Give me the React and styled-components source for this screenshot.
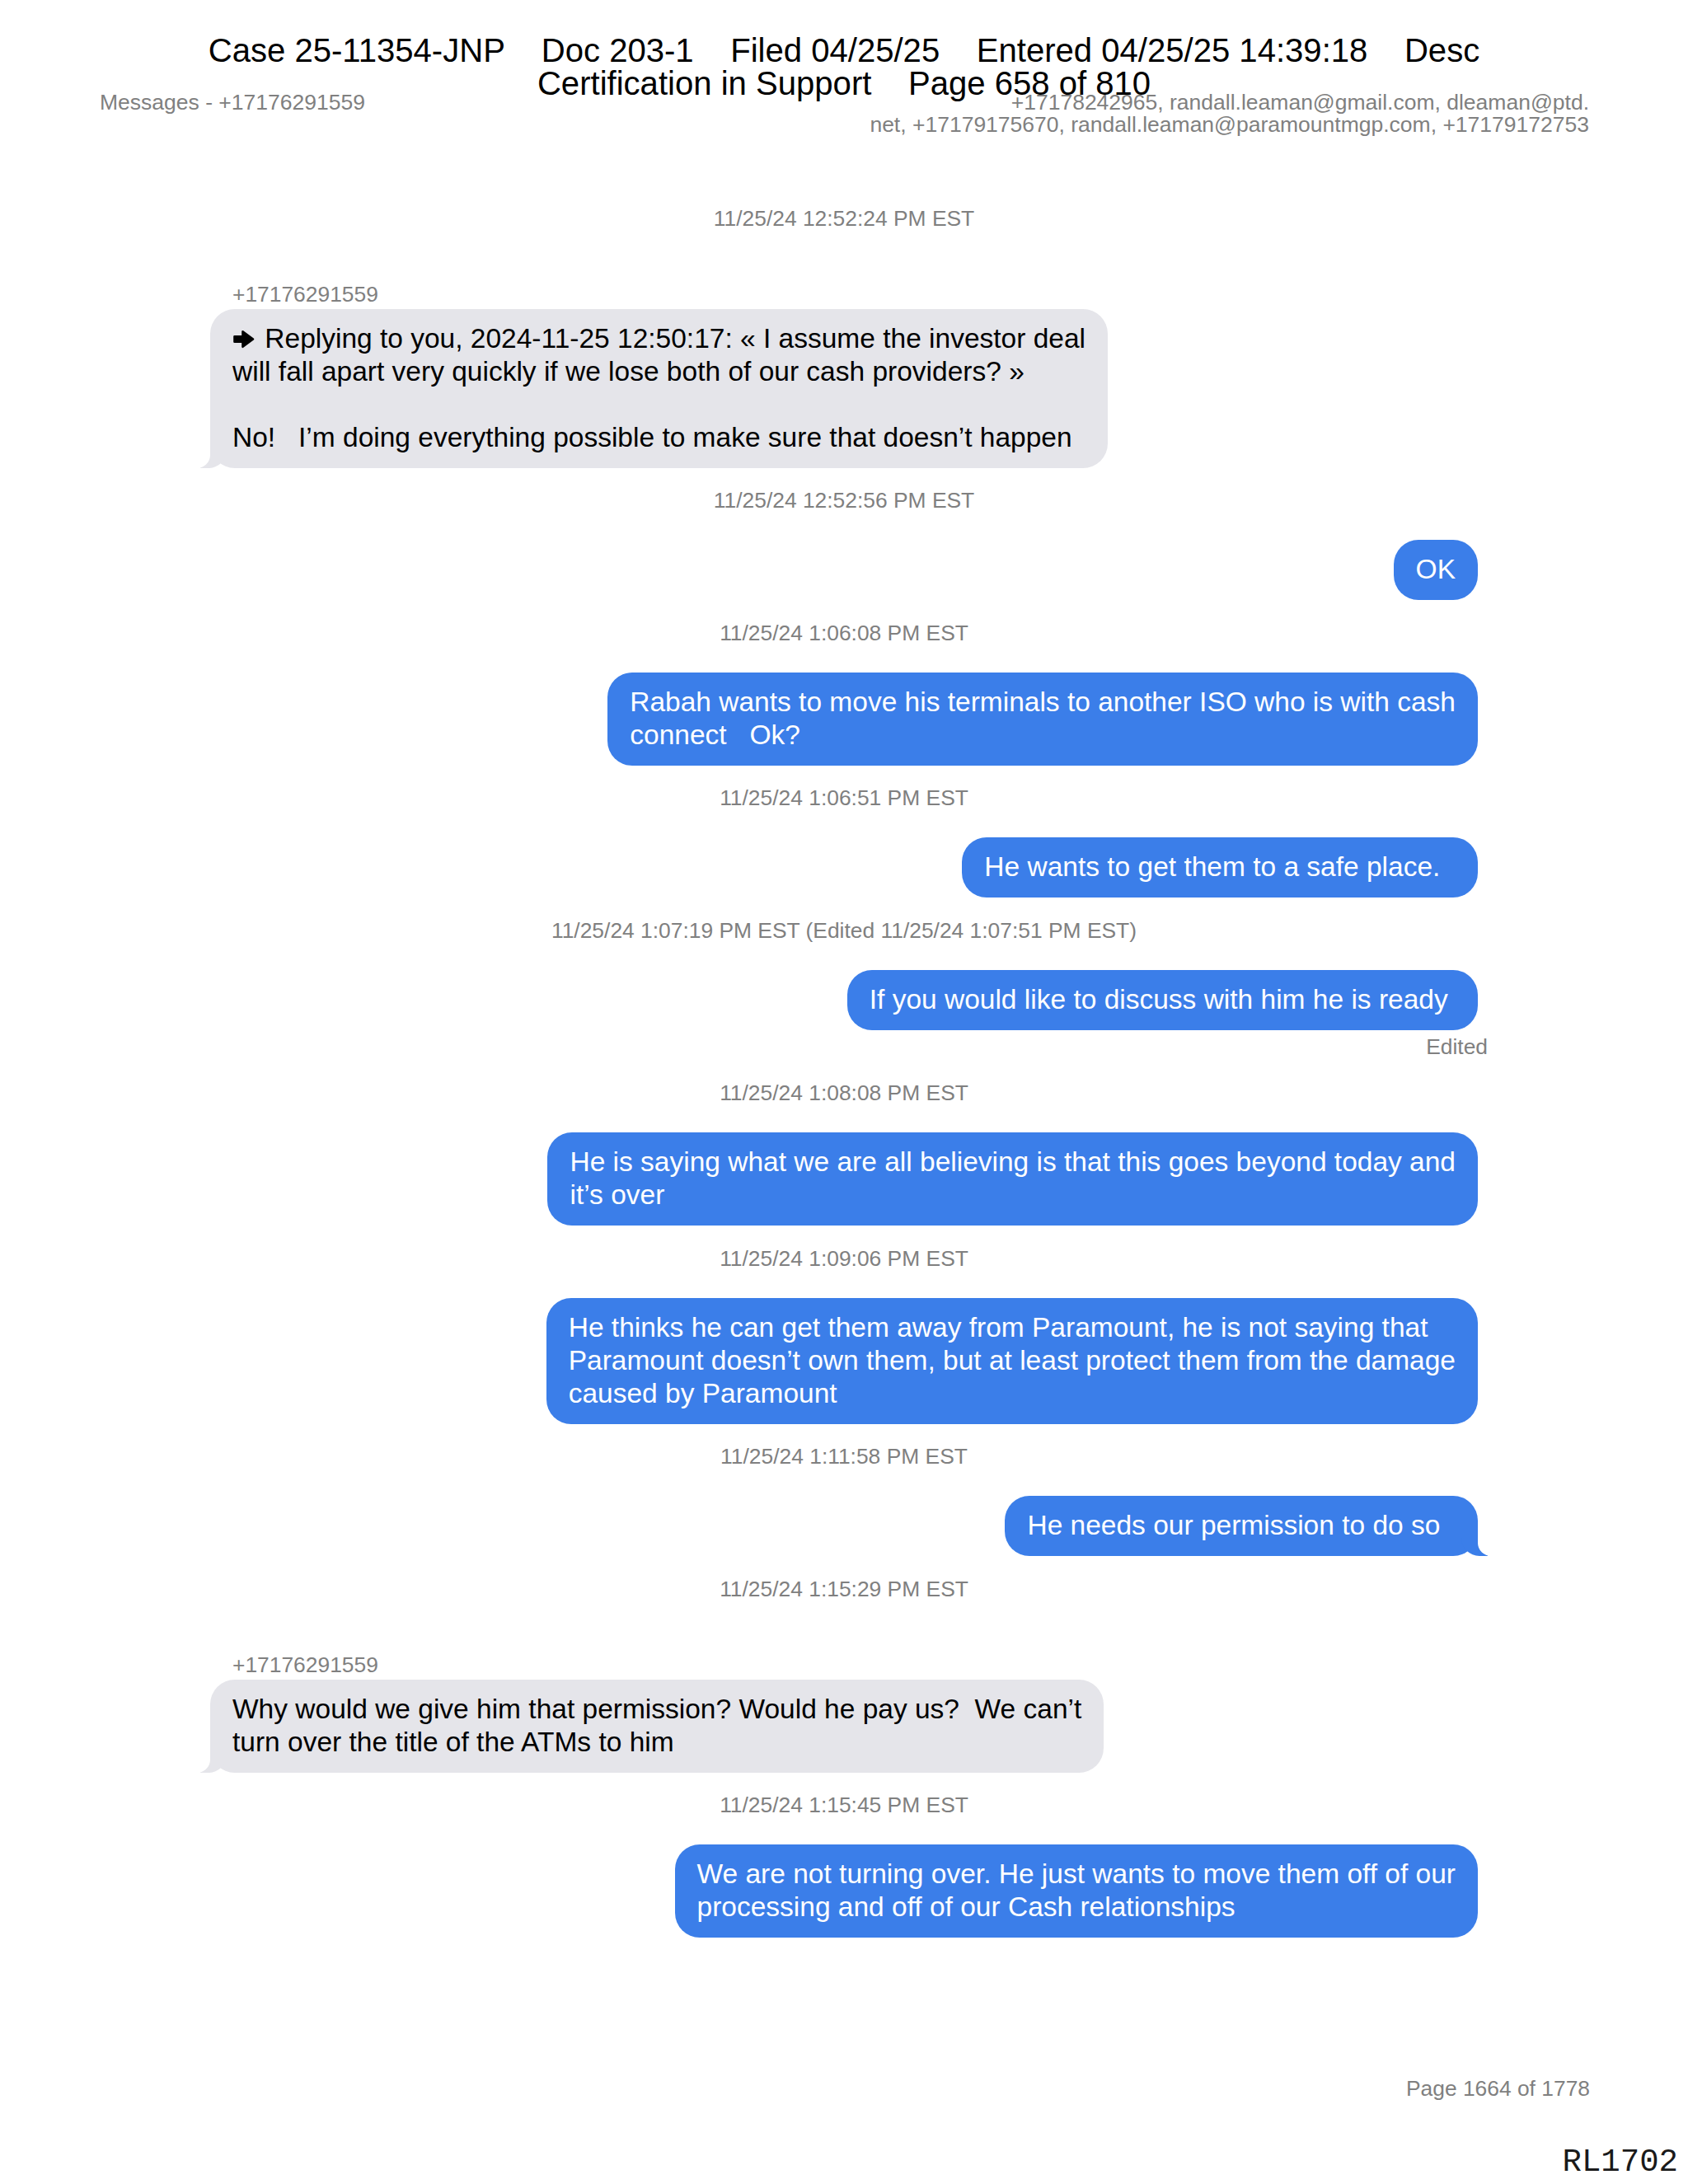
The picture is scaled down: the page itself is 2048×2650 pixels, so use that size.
import React from 'react'
import styled, { createGlobalStyle, css } from 'styled-components'

const GlobalStyle = createGlobalStyle`
  html, body {
    margin: 0;
    padding: 0;
    background: #ffffff;
  }

  body {
    font-family: 'Liberation Sans', Arial, sans-serif;
  }
`

const SENDER = '+17176291559'

const messages = [
  {
    time: '11/25/24 12:52:24 PM EST',
    mine: false,
    reply: true,
    tail: true,
    text: 'Replying to you, 2024-11-25 12:50:17: « I assume the investor deal\nwill fall apart very quickly if we lose both of our cash providers? »\n\nNo!   I’m doing everything possible to make sure that doesn’t happen',
  },
  { time: '11/25/24 12:52:56 PM EST', mine: true, text: 'OK' },
  {
    time: '11/25/24 1:06:08 PM EST',
    mine: true,
    text: 'Rabah wants to move his terminals to another ISO who is with cash\nconnect   Ok?',
  },
  { time: '11/25/24 1:06:51 PM EST', mine: true, text: 'He wants to get them to a safe place.\u00a0\u00a0' },
  {
    time: '11/25/24 1:07:19 PM EST (Edited 11/25/24 1:07:51 PM EST)',
    mine: true,
    edited: true,
    text: 'If you would like to discuss with him he is ready\u00a0',
  },
  {
    time: '11/25/24 1:08:08 PM EST',
    mine: true,
    text: 'He is saying what we are all believing is that this goes beyond today and\nit’s over',
  },
  {
    time: '11/25/24 1:09:06 PM EST',
    mine: true,
    text: 'He thinks he can get them away from Paramount, he is not saying that\nParamount doesn’t own them, but at least protect them from the damage\ncaused by Paramount',
  },
  { time: '11/25/24 1:11:58 PM EST', mine: true, tail: true, text: 'He needs our permission to do so\u00a0\u00a0' },
  {
    time: '11/25/24 1:15:29 PM EST',
    mine: false,
    tail: true,
    text: 'Why would we give him that permission? Would he pay us?  We can’t\nturn over the title of the ATMs to him',
  },
  {
    time: '11/25/24 1:15:45 PM EST',
    mine: true,
    text: 'We are not turning over. He just wants to move them off of our\nprocessing and off of our Cash relationships',
  },
]

// heavy right arrow that starts a quoted reply
const ReplyArrow = () => (
  <Arrow viewBox="0 0 27 23" aria-hidden="true">
    <path
      d="M2.5 8.2 H12.5 V2.2 L25 11.5 L12.5 20.8 V14.8 H2.5 Z"
      fill="#000"
      stroke="#000"
      strokeWidth="2.6"
      strokeLinejoin="round"
    />
  </Arrow>
)

export default function App() {
  return (
    <Page>
      <GlobalStyle />
      <FilingStamp>
        {'Case 25-11354-JNP    Doc 203-1    Filed 04/25/25    Entered 04/25/25 14:39:18    Desc\nCertification in Support    Page 658 of 810'}
      </FilingStamp>

      <HeaderBar>
        <div>Messages - {SENDER}</div>
        <Recipients>
          <span>+17178242965, randall.leaman@gmail.com, dleaman@ptd.</span>
          <span>net, +17179175670, randall.leaman@paramountmgp.com, +17179172753</span>
        </Recipients>
      </HeaderBar>

      <Thread>
        {messages.map((m, i) => (
          <React.Fragment key={i}>
            <Timestamp>{m.time}</Timestamp>
            {!m.mine && <Sender>{SENDER}</Sender>}
            <Bubble $mine={m.mine} $tail={m.tail}>
              {m.reply && <ReplyArrow />}
              {m.reply && ' '}
              {m.text}
            </Bubble>
            {m.edited && <EditedNote>Edited</EditedNote>}
          </React.Fragment>
        ))}
      </Thread>

      <Footer>
        <PageNumber>Page 1664 of 1778</PageNumber>
        <BatesNumber>RL1702</BatesNumber>
      </Footer>
    </Page>
  )
}

const Page = styled.div`
  position: relative;
  box-sizing: border-box;
  min-height: 2650px;
  display: flex;
  flex-direction: column;
  padding-top: 110px;
`

const FilingStamp = styled.div`
  position: absolute;
  top: 41px;
  left: 0;
  right: 0;
  z-index: 2;
  text-align: center;
  white-space: pre;
  font-size: 40.1px;
  line-height: 40px;
  color: #000000;
`

const HeaderBar = styled.header`
  display: flex;
  justify-content: space-between;
  align-items: flex-start;
  padding: 1px 120px 0 121px;
  font-size: 26.5px;
  line-height: 27px;
  color: #808080;
`

const Recipients = styled.div`
  display: flex;
  flex-direction: column;
  align-items: flex-end;
`

const Thread = styled.main`
  width: 1538px;
  margin: 60px auto 0;
  display: flex;
  flex-direction: column;
`

const smallGrey = css`
  font-size: 26.4px;
  line-height: 30px;
  color: #808080;
`

const Timestamp = styled.div`
  ${smallGrey}
  padding-top: 24.5px;
  margin-bottom: 33px;
  text-align: center;
`

const Sender = styled.div`
  ${smallGrey}
  padding: 29px 0 3px 27px;
`

const EditedNote = styled.div`
  ${smallGrey}
  align-self: flex-end;
  margin-right: -12px;
  padding: 5px 0 2px;
`

const tailLeft = css`
  &::before {
    content: '';
    position: absolute;
    bottom: 0;
    left: -12px;
    width: 32px;
    height: 30px;
    background: #e5e5ea;
    border-bottom-right-radius: 22px;
  }

  &::after {
    content: '';
    position: absolute;
    bottom: 0;
    left: -40px;
    width: 40px;
    height: 31px;
    background: #ffffff;
    border-bottom-right-radius: 16px;
  }
`

const tailRight = css`
  &::before {
    content: '';
    position: absolute;
    bottom: 0;
    right: -12px;
    width: 32px;
    height: 30px;
    background: #3b7ee9;
    border-bottom-left-radius: 22px;
  }

  &::after {
    content: '';
    position: absolute;
    bottom: 0;
    right: -40px;
    width: 40px;
    height: 31px;
    background: #ffffff;
    border-bottom-left-radius: 16px;
  }
`

const Bubble = styled.div`
  position: relative;
  align-self: ${(p) => (p.$mine ? 'flex-end' : 'flex-start')};
  padding: 16px 27px 17px;
  border-radius: 30px;
  background: ${(p) => (p.$mine ? '#3b7ee9' : '#e5e5ea')};
  color: ${(p) => (p.$mine ? '#ffffff' : '#000000')};
  font-size: 33.5px;
  line-height: 40px;
  white-space: pre;

  ${(p) => p.$tail && (p.$mine ? tailRight : tailLeft)}
`

const Arrow = styled.svg`
  width: 27px;
  height: 23px;
  margin-right: 3px;
  vertical-align: -1px;
`

const Footer = styled.footer`
  margin-top: auto;
  display: flex;
  flex-direction: column;
  align-items: flex-end;
  padding: 0 12px 4px 0;
`

const PageNumber = styled.div`
  ${smallGrey}
  margin-right: 107px;
`

const BatesNumber = styled.div`
  margin-top: 53px;
  font-family: 'Liberation Mono', 'Courier New', monospace;
  font-size: 39px;
  line-height: 44px;
  color: #1a1a1a;
`
